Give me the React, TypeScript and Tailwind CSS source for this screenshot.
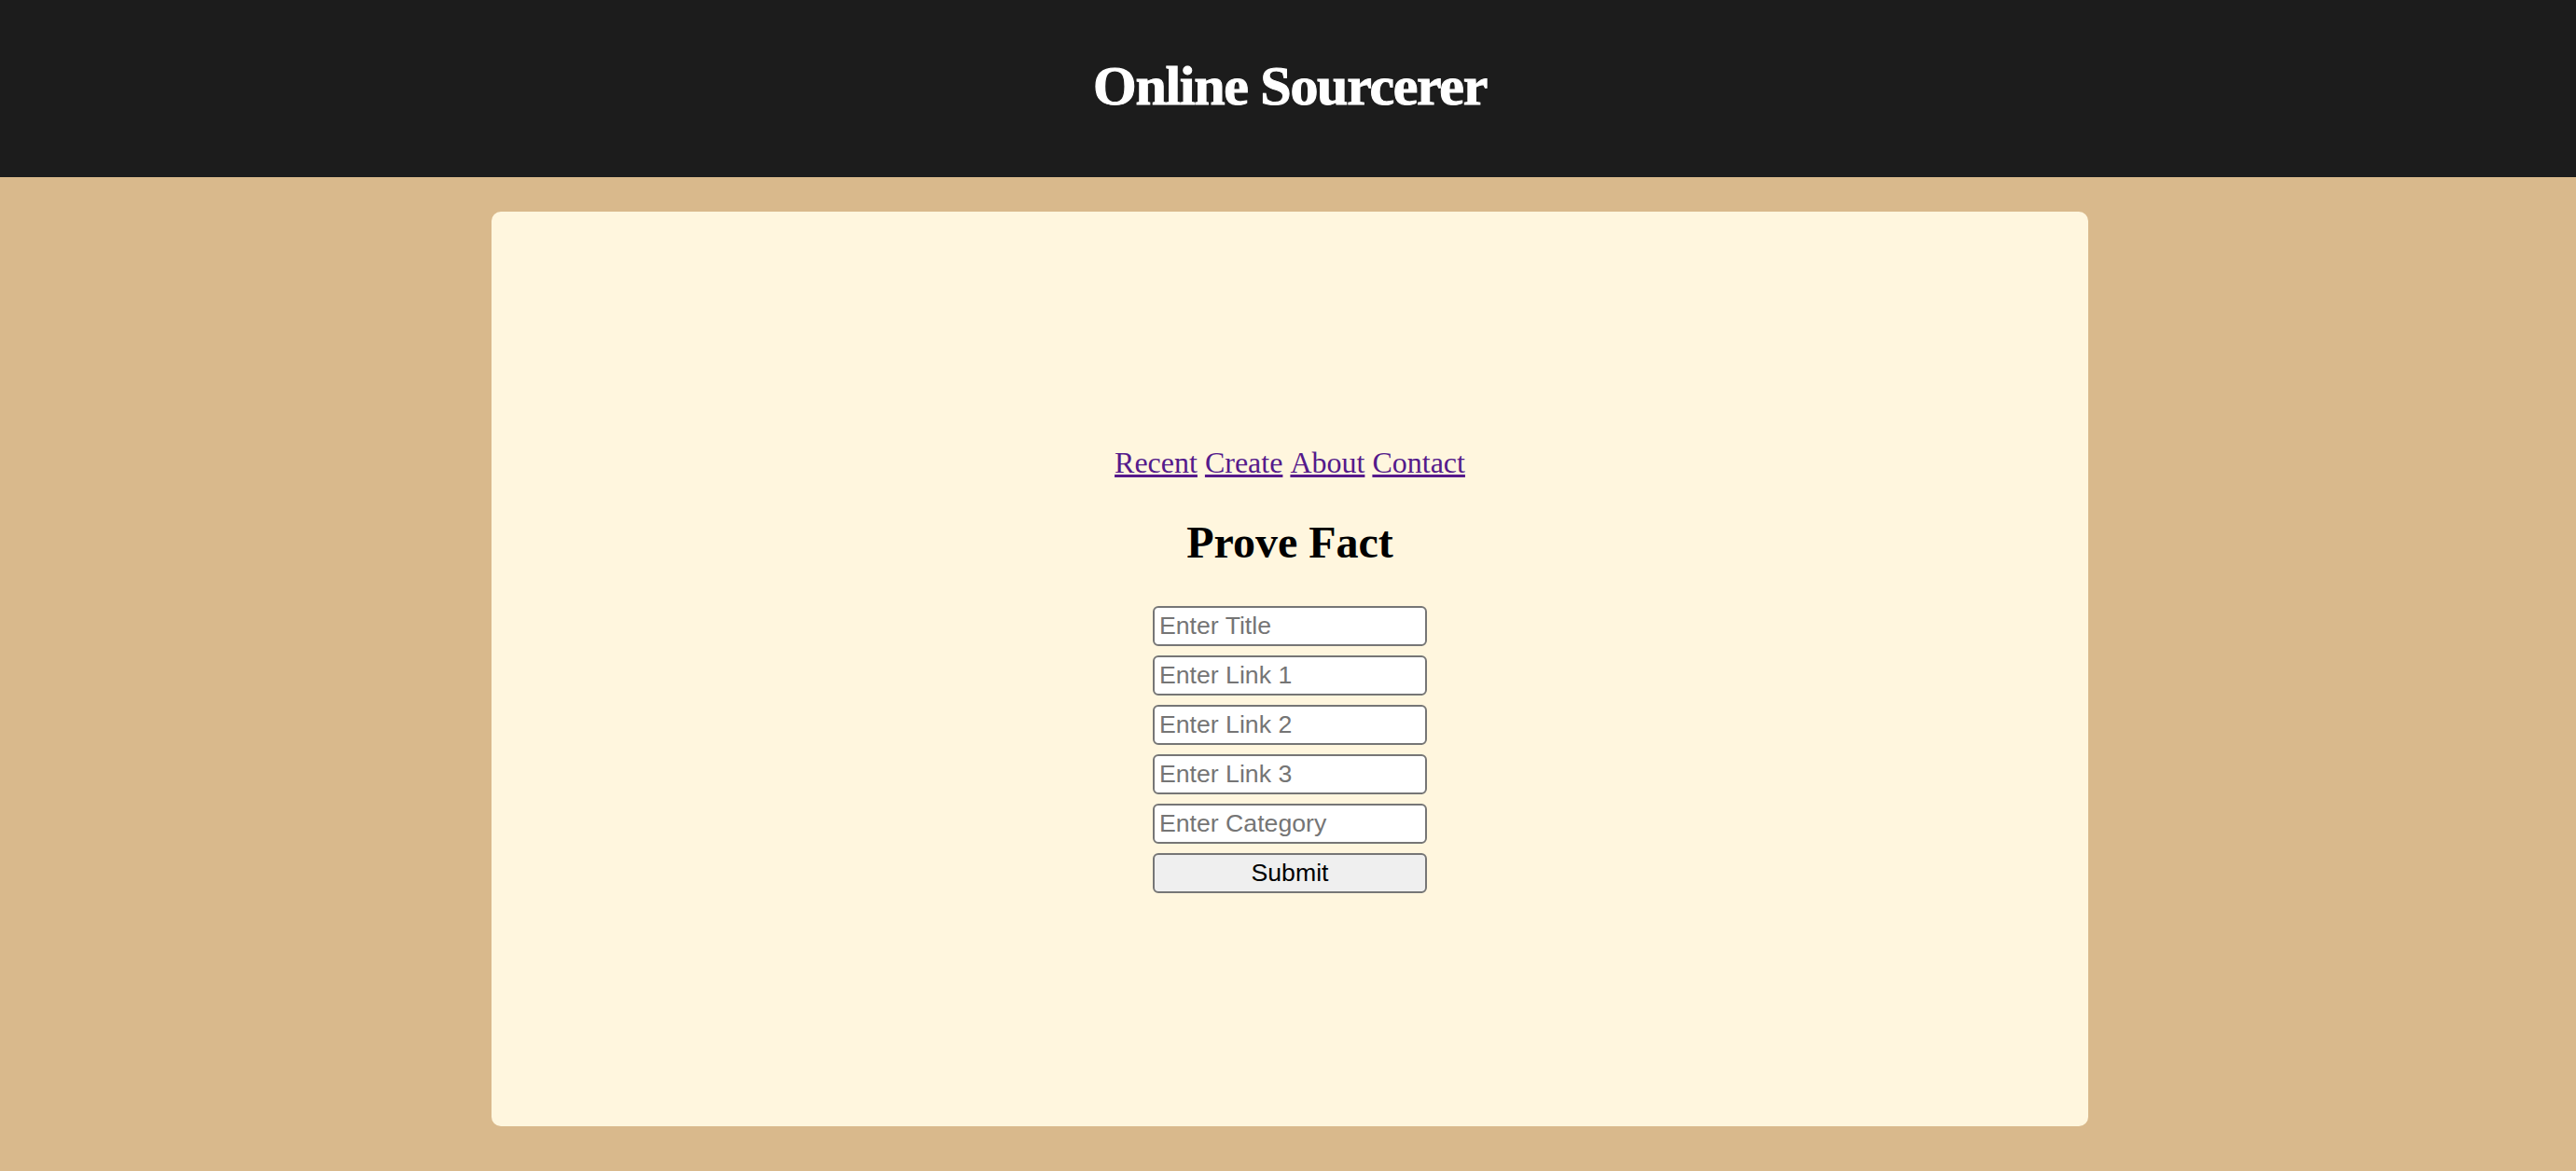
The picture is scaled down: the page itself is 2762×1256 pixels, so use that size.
const fields = ["Enter Title", "Enter Link 1", "Enter Link 2", "Enter Link 3", "Enter Category"];
const links = ["Recent", "Create", "About", "Contact"];

const App = () => {
  return (
    <div className="min-h-screen bg-[#d9b98c] pl-[4px] font-['Liberation_Serif',serif]">
      <header className="-ml-[4px] pl-[4px] h-[190px] bg-[#1c1c1c] flex justify-center pt-[58px]">
        <h1 className="text-[60px] leading-[68px] font-bold text-white tracking-[-1.3px] [-webkit-text-stroke:1px_white]">Online Sourcerer</h1>
      </header>

      <main className="mx-auto mt-[37px] w-[1712px] h-[981px] bg-[#fff6de] rounded-[10px] flex flex-col items-center justify-center">
        <nav className="text-[32px] leading-[39px] text-[#551a8b] flex gap-[8px]">
          {links.map((link) => (
            <a key={link} href="#" className="underline">{link}</a>
          ))}
        </nav>

        <h2 className="mt-[38px] text-[48px] leading-[56px] font-bold text-black">Prove Fact</h2>

        <form className="mt-[40px] flex flex-col gap-[10px] font-['Liberation_Sans',sans-serif]">
          {fields.map((field) => (
            <input
              key={field}
              type="text"
              placeholder={field}
              className="w-[294px] h-[43px] px-[5px] bg-white border-2 border-[#767676] rounded-[6px] text-[26.67px] placeholder:text-[#757575]"
            />
          ))}
          <button type="button" className="w-[294px] h-[43px] bg-[#efefef] border-2 border-[#767676] rounded-[6px] text-[26.67px] leading-none text-black">
            Submit
          </button>
        </form>
      </main>
    </div>
  );
};

export default App;
